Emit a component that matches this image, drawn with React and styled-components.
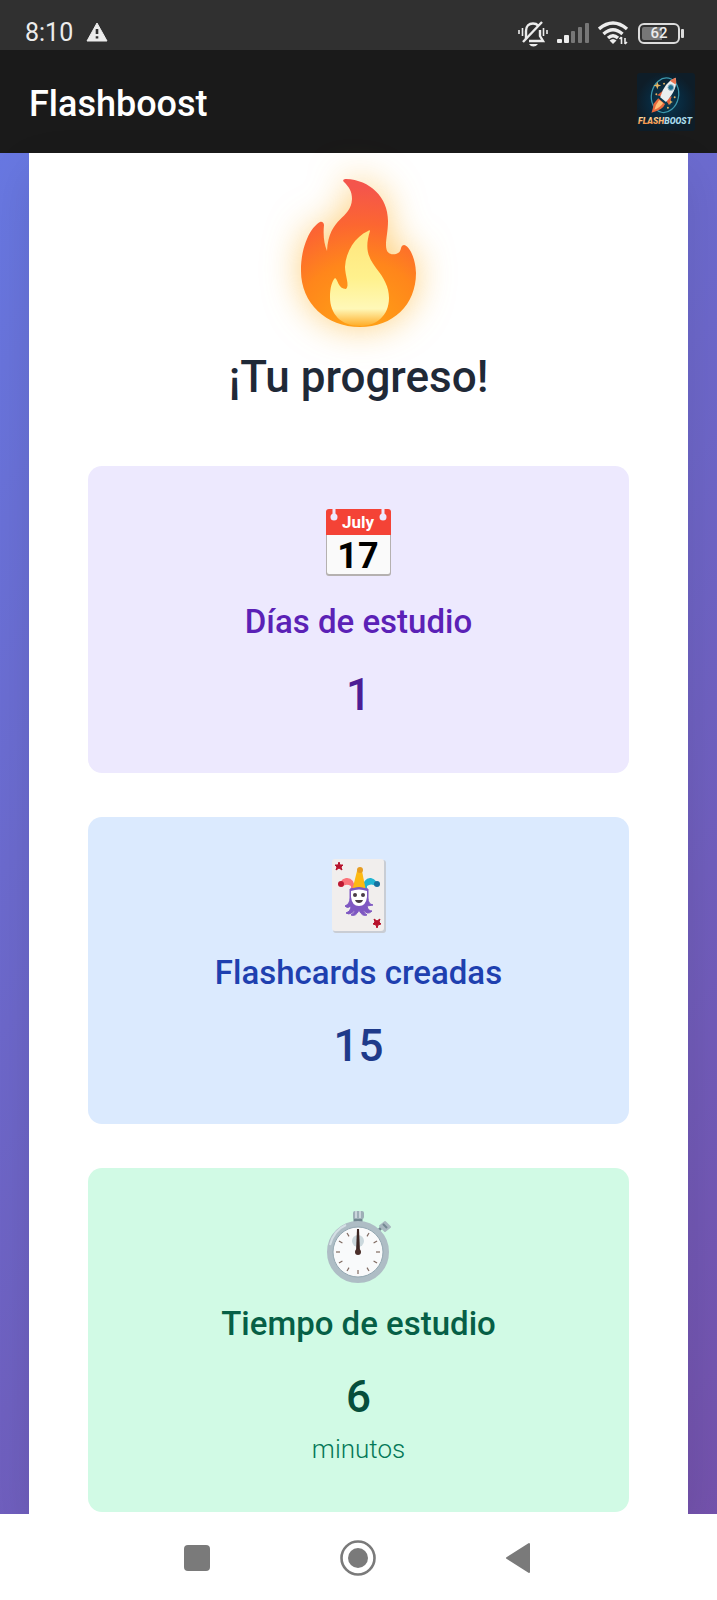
import React from 'react';
import styled, { createGlobalStyle } from 'styled-components';

const GlobalStyle = createGlobalStyle`
  * {
    box-sizing: border-box;
  }
  body {
    margin: 0;
    font-family: Roboto, "Noto Sans", sans-serif;
  }
`;

const stats = [
  {
    id: 'days',
    label: 'Días de estudio',
    value: 1,
    Icon: CalendarIcon,
    colors: { background: '#ede9fe', label: '#5b21b6', value: '#4c1d95' },
  },
  {
    id: 'cards',
    label: 'Flashcards creadas',
    value: 15,
    Icon: JokerIcon,
    colors: { background: '#dbeafe', label: '#1e40af', value: '#1e3a8a' },
  },
  {
    id: 'time',
    label: 'Tiempo de estudio',
    value: 6,
    unit: 'minutos',
    Icon: StopwatchIcon,
    colors: { background: '#d1fae5', label: '#065f46', value: '#064e3b', unit: '#047857' },
  },
];

export default function App() {
  return (
    <>
      <GlobalStyle />
      <Screen>
        <StatusBar />
        <Header>
          <Brand>Flashboost</Brand>
          <Logo />
        </Header>
        <Main>
          <Panel>
            <FlameIcon />
            <Title>¡Tu progreso!</Title>
            <StatList>
              {stats.map((stat) => (
                <StatCard key={stat.id} $colors={stat.colors}>
                  <stat.Icon />
                  <h2>{stat.label}</h2>
                  <p className="value">{stat.value}</p>
                  {stat.unit && <p className="unit">{stat.unit}</p>}
                </StatCard>
              ))}
            </StatList>
          </Panel>
        </Main>
        <SystemNav />
      </Screen>
    </>
  );
}

function StatusBar() {
  return (
    <Status>
      <StatusGroup $gap={13}>
        <span>8:10</span>
        <svg width="22" height="20" viewBox="0 1 22 20">
          <path d="M11 1 L21 19 H1 Z" fill="#ececec" stroke="#ececec" strokeWidth="1" strokeLinejoin="round" />
          <path d="M11 7 V12 M11 14.2 V16.6" stroke="#303030" strokeWidth="2.6" />
        </svg>
      </StatusGroup>
      <StatusGroup $gap={9}>
        <svg width="30" height="27" viewBox="0 0 30 27" fill="none" stroke="#ececec" strokeWidth="2.4">
          <path d="M8 19 V11 C8 6 11 3.5 15 3.5 C17 3.5 19 4.3 20.3 5.6 M22 10 V16 L25 21 H11" />
          <path d="M5 22 L24 2" />
          <path d="M11 24 H20 Q18 26.5 15.5 26.5 Q12.5 26.5 11 24 Z" fill="#ececec" stroke="none" />
          <path d="M1 10 V14 M4.5 8 V16 M25.5 8 V16 M29 10 V14" strokeWidth="1.6" />
        </svg>
        <svg width="32" height="22" viewBox="0 0 32 22">
          <g fill="#ececec">
            <rect x="0" y="17" width="5" height="4" rx="1" />
            <rect x="7" y="13" width="5" height="8" rx="1" />
          </g>
          <g fill="#777">
            <rect x="14" y="9" width="4" height="12" rx="1" />
            <rect x="21" y="5" width="4" height="16" rx="1" />
            <rect x="28" y="1" width="4" height="20" rx="1" />
          </g>
        </svg>
        <svg width="31" height="24" viewBox="0 0 31 24" fill="none" stroke="#ececec" strokeWidth="3.4">
          <path d="M1 8 Q15 -4 29 8" />
          <path d="M5.5 13 Q15 4.5 24.5 13" />
          <path d="M10 17 Q15 12.5 20 17" />
          <path d="M11.5 19.5 Q15 16.5 18.5 19.5 L15 23 Z" fill="#ececec" stroke="none" />
          <path d="M23.5 23 V16 M21.5 18 L23.5 16 M27 17 V23 M27 23 L29 21" strokeWidth="1.6" />
        </svg>
        <Battery>
          <BatteryLevel>62</BatteryLevel>
          <svg width="3" height="9" viewBox="0 0 3 9">
            <rect width="3" height="9" rx="1" fill="#dcdcdc" />
          </svg>
        </Battery>
      </StatusGroup>
    </Status>
  );
}

function Logo() {
  return (
    <svg width="58" height="58" viewBox="0 0 60 60" role="img" aria-label="Flashboost">
      <defs>
        <radialGradient id="logoBg">
          <stop offset="0" stopColor="#0c3b52" />
          <stop offset="0.6" stopColor="#09283c" />
          <stop offset="1" stopColor="#0e1d28" />
        </radialGradient>
        <linearGradient id="logoText" x1="0" y1="0" x2="0" y2="1">
          <stop offset="0" stopColor="#ffe3a6" />
          <stop offset="1" stopColor="#f47a2a" />
        </linearGradient>
      </defs>
      <rect width="60" height="60" rx="3" fill="url(#logoBg)" />
      <ellipse cx="29" cy="23" rx="14" ry="18" fill="none" stroke="#3c98ad" strokeWidth="1.3" transform="rotate(12 29 23)" />
      <g fill="#e7b562">
        <path d="M21 9 l1 3 3 1 -3 1 -1 3 -1 -3 -3 -1 3 -1z" />
        <path d="M34 27 l1 2 2 1 -2 1 -1 2 -1 -2 -2 -1 2 -1z" />
        <circle cx="20" cy="22" r="1" />
        <circle cx="28" cy="11" r="1" />
        <circle cx="32" cy="36" r="1" />
        <circle cx="39" cy="25" r="1" />
      </g>
      <path d="M22 26 L29 32 Q27 38 15 41 Q17 35 17 32 Z" fill="#e7683c" />
      <path d="M23 28 L27 31 Q24 36 18 38 Q19 33 23 28 Z" fill="#ffbf79" />
      <path d="M27 18 L21 23 L25 24 Z M36 24 L33 33 L30 28 Z" fill="#e65f3c" />
      <path d="M40 5 Q43 16 30 30 L24 25 Q28 10 40 5 Z" fill="#e9eef0" />
      <path d="M40 5 Q41 9 40 12 L34 8 Q37 6 40 5 Z" fill="#e97450" />
      <circle cx="35" cy="15" r="3" fill="#1f6f90" stroke="#9eb9c4" />
      <text x="29" y="53" textAnchor="middle" fontSize="9" fontWeight="900" fontStyle="italic">
        <tspan fill="url(#logoText)">FLASH</tspan>
        <tspan fill="#a9dbea">BOOST</tspan>
      </text>
    </svg>
  );
}

function FlameIcon() {
  return (
    <Flame viewBox="0 0 118 148" aria-hidden="true">
      <defs>
        <radialGradient id="flameOuter" cx="61" cy="150" r="150" gradientUnits="userSpaceOnUse">
          <stop offset="0.1" stopColor="#ff9e16" />
          <stop offset="0.45" stopColor="#ff861b" />
          <stop offset="0.7" stopColor="#fc6631" />
          <stop offset="0.95" stopColor="#f4554c" />
        </radialGradient>
        <linearGradient id="flameInner" x1="0" y1="0" x2="0" y2="1">
          <stop offset="0" stopColor="#ffe57c" />
          <stop offset="0.5" stopColor="#fff18d" />
          <stop offset="0.82" stopColor="#fff8b8" />
          <stop offset="1" stopColor="#ffad28" />
        </linearGradient>
      </defs>
      <path
        d="M46 0 C70 1 88 18 88 42 C88 52 86 59 86 66 C86 75 91 76 96 75 C103 73 99 67 104 66 C109 66 116 80 116 94 C116 126 93 148 60 148 C26 148 1 124 1 92 C1 66 11 48 20 43 C22 42 24 44 24 46 C23 56 24 65 27 72 C29 37 51 41 52 20 C52 12 49 8 44 3 C42 1 44 0 46 0 Z"
        fill="url(#flameOuter)"
      />
      <path
        d="M70 52 C65 68 67 77 76 89 C84 99 89 108 89 119 C89 137 76 147 60 147 C41 147 30 135 30 118 C30 109 32 102 35 99 C38 100 38 110 46 110 C50 107 45 96 45 88 C46 72 55 58 68 52 C69 51 70 51 70 52 Z"
        fill="url(#flameInner)"
      />
    </Flame>
  );
}

function CalendarIcon() {
  return (
    <StatIcon viewBox="1 1 80 80" aria-hidden="true">
      <rect x="8" y="8" width="65" height="66" rx="3" fill="#b5b1b0" />
      <rect x="9" y="9" width="63" height="63" rx="2" fill="#fafafa" />
      <path d="M8 33 V10 Q8 7 11 7 H70 Q73 7 73 10 V33 Z" fill="#f44336" />
      <path d="M16 6 V14 M65 6 V14" stroke="#ede9fe" strokeWidth="3" />
      <circle cx="16" cy="15" r="3.5" fill="#ede9fe" />
      <circle cx="65" cy="15" r="3.5" fill="#ede9fe" />
      <text x="40" y="26" textAnchor="middle" fontSize="17" fontWeight="700" fill="#fff">July</text>
      <text x="40" y="66" textAnchor="middle" fontSize="36" fontWeight="700" fill="#000">17</text>
    </StatIcon>
  );
}

function JokerIcon() {
  return (
    <StatIcon viewBox="1 -1 80 80" aria-hidden="true">
      <rect x="15" y="5" width="53" height="73" rx="3" fill="#c9cdd4" />
      <rect x="14" y="4" width="52" height="72" rx="3" fill="#f1eeed" />
      <path d="M21 7 L22 10 L25 10 L23 12 L24 15 L21 13 L18 15 L19 12 L17 10 L20 10 Z" fill="#b7132c" stroke="#b7132c" />
      <path d="M59 73 L60 70 L63 69 L61 67 L62 64 L59 66 L56 64 L57 67 L55 69 L58 70 Z" fill="#b7132c" stroke="#b7132c" />
      <path d="M33 37 V31 Q28 28 24 32 Q20 25 28 23 Q36 22 37 34 Z" fill="#fb747b" />
      <path d="M49 37 V31 Q53 28 58 31 Q60 25 53 23 Q46 22 44 34 Z" fill="#21b4d2" />
      <path d="M34 36 L39 16 H44 L48 36 Z" fill="#fdb913" />
      <circle cx="42" cy="15" r="3" fill="#e69c22" />
      <circle cx="23" cy="29" r="3" fill="#bd1831" />
      <circle cx="59" cy="29" r="3" fill="#15709f" />
      <path
        d="M32 34 Q41 31 50 34 V43 Q50 49 55 50 L49 51 Q50 56 54 56 Q49 61 45 54 Q46 59 49 60 Q44 62 41 55 Q38 62 33 60 Q37 58 37 54 Q33 61 28 58 Q33 56 33 51 Q29 54 27 51 Q32 49 32 43 Z"
        fill="#7e57c2"
        stroke="#7e57c2"
      />
      <path d="M33 36 Q41 33 49 36 V42 Q48 51 41 51 Q34 51 33 42 Z" fill="#fff" />
      <circle cx="37" cy="40" r="2" fill="#493d45" />
      <circle cx="45" cy="40" r="2" fill="#493d45" />
      <path d="M37 45 H45 Q44 48 41 48 Q38 48 37 45 Z" fill="#493d45" />
    </StatIcon>
  );
}

function StopwatchIcon() {
  return (
    <StatIcon viewBox="1 -1 80 80" aria-hidden="true">
      <path d="M37 10 H43 V17 H37 Z M60 25 L65 20" fill="#71868f" stroke="#71868f" strokeWidth="3" />
      <rect x="35" y="5" width="11" height="8" rx="2" fill="#9eafb7" />
      <path d="M38 5 V12 M42 5 V12" stroke="#cbd5dc" strokeWidth="2" />
      <path d="M62 20 L67 16 L72 21 L67 25 Z" fill="#a8b8bf" stroke="#a8b8bf" strokeWidth="2" strokeLinejoin="round" />
      <path d="M65 18 L69 22" stroke="#738992" strokeWidth="2" />
      <circle cx="40" cy="46" r="28" fill="#f9fafb" stroke="#aebdc5" strokeWidth="6" />
      <circle cx="40" cy="46" r="25" fill="none" stroke="#93a7b1" />
      <path d="M12 39 Q16 24 28 19" fill="none" stroke="#d4dfe4" strokeWidth="2" />
      <circle cx="40" cy="35" r="6" fill="#cbd8dd" />
      {[30, 60, 90, 120, 150, 180, 210, 240, 270, 300, 330].map((angle) => (
        <path key={angle} d="M40 24 V28" stroke="#806b62" strokeWidth="1.2" transform={`rotate(${angle} 40 46)`} />
      ))}
      <path d="M39 23 H41 L42 46 H38 Z" fill="#3d2723" />
      <circle cx="40" cy="46" r="3" fill="#4b2f2a" />
    </StatIcon>
  );
}

function SystemNav() {
  return (
    <NavBar>
      <NavButton aria-label="Recientes">
        <svg width="36" height="36" viewBox="0 0 36 36">
          <rect x="4" y="5" width="26" height="26" rx="4" fill="#7a7a7a" />
        </svg>
      </NavButton>
      <NavButton aria-label="Inicio">
        <svg width="36" height="36" viewBox="0 0 36 36">
          <circle cx="18" cy="18" r="16.5" fill="none" stroke="#7a7a7a" strokeWidth="2.6" />
          <circle cx="18" cy="18" r="10" fill="#7a7a7a" />
        </svg>
      </NavButton>
      <NavButton aria-label="Atrás">
        <svg width="36" height="36" viewBox="0 0 36 36">
          <path d="M6 18 L28 4 V32 Z" fill="#7a7a7a" stroke="#7a7a7a" strokeWidth="2" strokeLinejoin="round" />
        </svg>
      </NavButton>
    </NavBar>
  );
}

const Screen = styled.div`
  min-height: 100vh;
  display: flex;
  flex-direction: column;
`;

const Status = styled.div`
  height: 50px;
  padding: 14px 33px 0 25px;
  display: flex;
  align-items: flex-start;
  justify-content: space-between;
  background-color: #303030;
  color: #ececec;
  font-size: 25px;
  line-height: 40px;
`;

const StatusGroup = styled.div`
  height: 38px;
  display: flex;
  align-items: center;
  gap: ${({ $gap }) => $gap}px;
`;

const Battery = styled.div`
  display: flex;
  align-items: center;
  gap: 1px;
`;

const BatteryLevel = styled.span`
  width: 42px;
  height: 21px;
  border: 2px solid #dcdcdc;
  border-radius: 6px;
  background: linear-gradient(90deg, #777 60%, #303030 60%) content-box;
  padding: 2px;
  font-size: 15px;
  font-weight: 500;
  line-height: 13px;
  text-align: center;
`;

const Header = styled.header`
  height: 103px;
  padding: 0 22px 0 29px;
  display: flex;
  align-items: center;
  justify-content: space-between;
  background-color: #1a1a1a;
`;

const Brand = styled.span`
  padding-top: 4px;
  color: white;
  font-size: 36px;
  font-weight: 500;
`;

const Main = styled.main`
  flex: 1;
  padding: 0 29px;
  display: flex;
  background: linear-gradient(135deg, #667eea -16%, #764ba2 119%);
`;

const Panel = styled.section`
  flex: 1;
  padding: 26px 59px 2px;
  display: flex;
  flex-direction: column;
  align-items: center;
  background-color: white;
  box-shadow: 0 18px 44px rgba(0, 0, 0, 0.1);
`;

const Flame = styled.svg`
  width: 118px;
  height: 148px;
  filter: drop-shadow(0 0 18px rgba(251, 176, 36, 0.6));
`;

const Title = styled.h1`
  margin: 19px 0 57px;
  color: #1f2937;
  font-size: 44px;
  font-weight: 500;
  line-height: 63px;
`;

const StatList = styled.div`
  width: 100%;
  display: flex;
  flex-direction: column;
  gap: 44px;
`;

const StatCard = styled.article`
  padding: 37px 44px 44px;
  display: flex;
  flex-direction: column;
  align-items: center;
  border-radius: 14px;
  background-color: ${({ $colors }) => $colors.background};
  text-align: center;
  h2 {
    margin: 14px 0;
    color: ${({ $colors }) => $colors.label};
    font-size: 33px;
    font-weight: 500;
    line-height: 50px;
  }
  p {
    margin: 0;
  }
  .value {
    color: ${({ $colors }) => $colors.value};
    font-size: 44px;
    font-weight: 500;
    line-height: 68px;
  }
  .unit {
    color: ${({ $colors }) => $colors.unit};
    font-size: 26px;
    font-weight: 300;
    line-height: 37px;
  }
`;

const StatIcon = styled.svg`
  width: 80px;
  height: 80px;
`;

const NavBar = styled.nav`
  height: 87px;
  padding: 0 118px;
  display: grid;
  grid-template-columns: repeat(3, 1fr);
  align-items: center;
  justify-items: center;
  background-color: white;
`;

const NavButton = styled.button`
  padding: 0;
  display: flex;
  border: none;
  background: none;
`;
